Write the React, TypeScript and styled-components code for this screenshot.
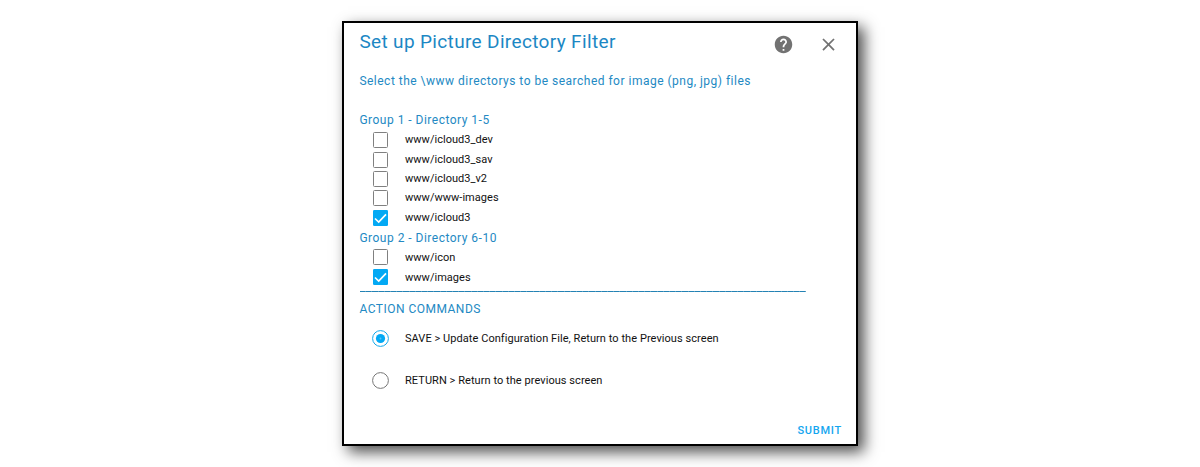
import React, { useState } from "react";
import styled, { createGlobalStyle } from "styled-components";

const GlobalStyle = createGlobalStyle`
  body {
    margin: 0;
    background: #fff;
    font-family: Roboto, sans-serif;
  }
`;

const Page = styled.main`
  box-sizing: border-box;
  height: 467px;
  padding: 21px 0 0 342px;
  overflow: hidden;
`;

const Dialog = styled.section`
  box-sizing: border-box;
  display: flex;
  flex-direction: column;
  width: 516px;
  height: 425px;
  padding: 0 14px 0 15px;
  border: 2px solid #000;
  background: #fff;
  box-shadow: 6px 6px 14px rgba(0, 0, 0, 0.7);
`;

const Header = styled.header`
  display: flex;
  align-items: center;
  height: 38px;
  padding-top: 2px;
`;

const Title = styled.h1`
  flex: 1;
  margin: -4px 0 0;
  padding-left: 0.4px;
  font-size: 19px;
  line-height: 24px;
  font-weight: 400;
  letter-spacing: 0.35px;
  color: #1c87c4;
`;

const IconButton = styled.button`
  display: flex;
  padding: 0;
  border: 0;
  background: none;
  color: #727272;
  & + & {
    margin-left: 24px;
    margin-right: 3px;
  }
`;

const Heading = styled.h2<{ $gap?: number }>`
  margin: ${(p) => p.$gap ?? 0}px 0 0;
  padding-left: 0.4px;
  font-size: 12px;
  line-height: 20px;
  font-weight: 400;
  letter-spacing: 0.49px;
  color: #2389c3;
`;

const Option = styled.label<{ $height: number }>`
  display: grid;
  grid-template-columns: 33px 1fr;
  align-items: start;
  height: ${(p) => p.$height}px;
  padding-left: 13px;
  font-size: 11px;
  line-height: 16px;
  color: #111;
`;

const Label = styled.span<{ $spacing?: number; $drop?: number }>`
  align-self: center;
  margin-top: ${(p) => p.$drop ?? -1}px;
  letter-spacing: ${(p) => p.$spacing ?? 0.03}px;
`;

const HiddenInput = styled.input`
  position: absolute;
  opacity: 0;
  pointer-events: none;
`;

const CheckMark = styled.svg<{ $top: number }>`
  display: block;
  width: 15px;
  height: 16px;
  margin: ${(p) => p.$top}px 0 0 1px;
`;

const RadioMark = styled.svg`
  display: block;
  width: 17px;
  height: 17px;
  margin-top: 2px;
`;

const Rule = styled.div`
  width: 446.5px;
  height: 1px;
  margin: 4px 0 0 0.5px;
  background: repeating-linear-gradient(90deg, #2482b4 0 5.3px, #559fc5 5.3px 6.2px);
`;

const Actions = styled.div`
  display: flex;
  flex-direction: column;
  gap: 22px;
  padding-top: 9px;
`;

const Submit = styled.button`
  align-self: flex-end;
  margin: 31px -1px 0 0;
  padding: 0;
  border: 0;
  background: none;
  font-family: inherit;
  font-size: 11px;
  line-height: 20px;
  font-weight: 500;
  letter-spacing: 0.75px;
  padding-right: 1px;
  color: #14a6ef;
`;

type Entry = { name: string; height: number; drop?: number; boxTop?: number };

const groupOne: Entry[] = [
  { name: "www/icloud3_dev", height: 20 },
  { name: "www/icloud3_sav", height: 19, drop: 1 },
  { name: "www/icloud3_v2", height: 19, drop: 1 },
  { name: "www/www-images", height: 20 },
  { name: "www/icloud3", height: 20 },
];

const groupTwo: Entry[] = [
  { name: "www/icon", height: 19, drop: 1, boxTop: 1 },
  { name: "www/images", height: 20, drop: 1 },
];

const commands = [
  { id: "save", text: "SAVE > Update Configuration File, Return to the Previous screen" },
  { id: "return", text: "RETURN > Return to the previous screen" },
];

function Checkbox({ checked, top = 2 }: { checked: boolean; top?: number }) {
  return (
    <CheckMark viewBox="0 0 15 16" $top={top}>
      {checked ? (
        <>
          <rect width="15" height="16" rx="1.3" fill="#03a9f4" />
          <path d="M2 8.5 L5.7 12.1 L13 4.4" fill="none" stroke="#fff" strokeWidth="1.7" />
        </>
      ) : (
        <rect x="0.5" y="0.5" width="14" height="15" rx="1" fill="#fff" stroke="#808080" />
      )}
    </CheckMark>
  );
}

function Radio({ checked }: { checked: boolean }) {
  return (
    <RadioMark viewBox="0 0 17 17">
      <circle cx="8.5" cy="8.5" r="7.9" fill="#fff" stroke={checked ? "#12a8ec" : "#777"} strokeWidth="1" />
      {checked && <circle cx="8.5" cy="8.5" r="4.6" fill="#03a9f4" />}
      {checked && <circle cx="8.5" cy="8.5" r="0.9" fill="#5bc5f5" />}
    </RadioMark>
  );
}

export default function App() {
  const [selected, setSelected] = useState<string[]>(["www/icloud3", "www/images"]);
  const [command, setCommand] = useState("save");

  const toggle = (name: string) =>
    setSelected((s) => (s.includes(name) ? s.filter((n) => n !== name) : [...s, name]));

  const renderEntry = ({ name, height, drop, boxTop }: Entry) => (
    <Option key={name} $height={height}>
      <HiddenInput type="checkbox" checked={selected.includes(name)} onChange={() => toggle(name)} />
      <Checkbox checked={selected.includes(name)} top={boxTop} />
      <Label $drop={drop}>{name}</Label>
    </Option>
  );

  return (
    <>
      <GlobalStyle />
      <Page>
        <Dialog>
          <Header>
            <Title>Set up Picture Directory Filter</Title>
            <IconButton>
              <svg width="21" height="21" viewBox="0 0 24 24" fill="currentColor">
                <path d="M12 2C6.48 2 2 6.48 2 12s4.48 10 10 10 10-4.48 10-10S17.52 2 12 2zm1 17h-2v-2h2v2zm2.07-7.75-.9.92C13.45 12.9 13 13.5 13 15h-2v-.5c0-1.1.45-2.1 1.17-2.83l1.24-1.26c.37-.36.59-.86.59-1.41 0-1.1-.9-2-2-2s-2 .9-2 2H8c0-2.21 1.79-4 4-4s4 1.79 4 4c0 .88-.36 1.68-.93 2.25z" />
              </svg>
            </IconButton>
            <IconButton>
              <svg width="21" height="21" viewBox="0 0 24 24" fill="currentColor">
                <path d="M19 6.41 17.59 5 12 10.59 6.41 5 5 6.41 10.59 12 5 17.59 6.41 19 12 13.41 17.59 19 19 17.59 13.41 12z" />
              </svg>
            </IconButton>
          </Header>
          <Heading $gap={8}>Select the \www directorys to be searched for image (png, jpg) files</Heading>
          <Heading $gap={19}>Group 1 - Directory 1-5</Heading>
          {groupOne.map(renderEntry)}
          <Heading>Group 2 - Directory 6-10</Heading>
          {groupTwo.map(renderEntry)}
          <Rule />
          <Heading $gap={7}>ACTION COMMANDS</Heading>
          <Actions>
            {commands.map(({ id, text }) => (
              <Option key={id} $height={20}>
                <HiddenInput type="radio" name="command" checked={command === id} onChange={() => setCommand(id)} />
                <Radio checked={command === id} />
                <Label $spacing={0.058} $drop={1}>{text}</Label>
              </Option>
            ))}
          </Actions>
          <Submit>SUBMIT</Submit>
        </Dialog>
      </Page>
    </>
  );
}
